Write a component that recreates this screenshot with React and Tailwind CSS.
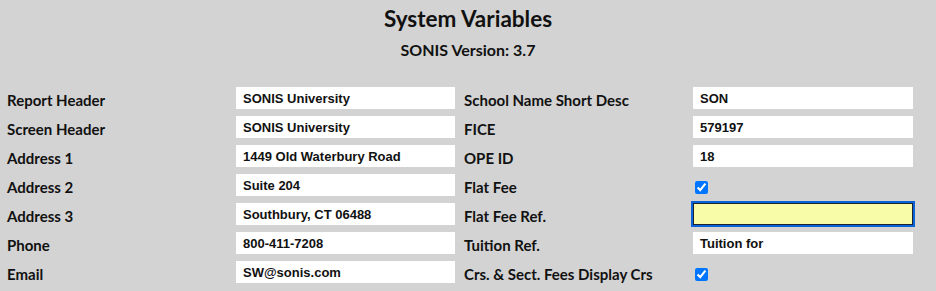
const leftRows = [
  ['Report Header', 'SONIS University'],
  ['Screen Header', 'SONIS University'],
  ['Address 1', '1449 Old Waterbury Road'],
  ['Address 2', 'Suite 204'],
  ['Address 3', 'Southbury, CT 06488'],
  ['Phone', '800-411-7208'],
  ['Email', 'SW@sonis.com'],
];

const rightRows = [
  { label: 'School Name Short Desc', value: 'SON' },
  { label: 'FICE', value: '579197' },
  { label: 'OPE ID', value: '18' },
  { label: 'Flat Fee', check: true },
  { label: 'Flat Fee Ref.', value: '', focused: true },
  { label: 'Tuition Ref.', value: 'Tuition for' },
  { label: 'Crs. & Sect. Fees Display Crs', check: true },
];

const labelCls = "font-['Lato',sans-serif] font-bold text-[15px] text-[#111] leading-none pt-[4px]";

const Field = ({ value, focused }) => (
  <div
    className={
      focused
        ? 'h-[22px] bg-[#f8fca8] border border-[#1b2433] outline-2 outline-[#0b63d6]'
        : 'h-[22px] bg-white flex items-center pl-[7px]'
    }
  >
    {!focused && (
      <span className="font-['Liberation_Sans',Arial,sans-serif] font-bold text-[13px] text-[#111] leading-none">
        {value}
      </span>
    )}
  </div>
);

const Check = () => (
  <div className="h-[22px] flex items-center pl-[2px] pt-[4px]">
    <input type="checkbox" defaultChecked className="w-[13px] h-[13px] m-0 accent-[#0075ff]" />
  </div>
);

export default function App() {
  return (
    <div className="w-[936px] h-[291px] bg-[#d3d3d3] overflow-hidden">
      <div className="flex flex-col items-center pt-[6px]">
        <h1 className="font-['Lato',sans-serif] font-bold text-[22.5px] text-[#111] leading-[26px]">System Variables</h1>
        <p className="font-['Lato',sans-serif] font-bold text-[16px] text-[#111] leading-none mt-[10px]">SONIS Version: 3.7</p>
      </div>

      <div className="grid grid-cols-[229px_219px_238px_220px] gap-y-[7px] pl-[7px] mt-[29px] items-center">
        {leftRows.map(([label, value], i) => {
          const r = rightRows[i];
          return (
            <div key={label} className="contents">
              <div className={labelCls}>{label}</div>
              <Field value={value} />
              <div className={labelCls + ' pl-[9px]'}>{r.label}</div>
              {r.check ? <Check /> : <Field value={r.value} focused={r.focused} />}
            </div>
          );
        })}
      </div>
    </div>
  );
}
